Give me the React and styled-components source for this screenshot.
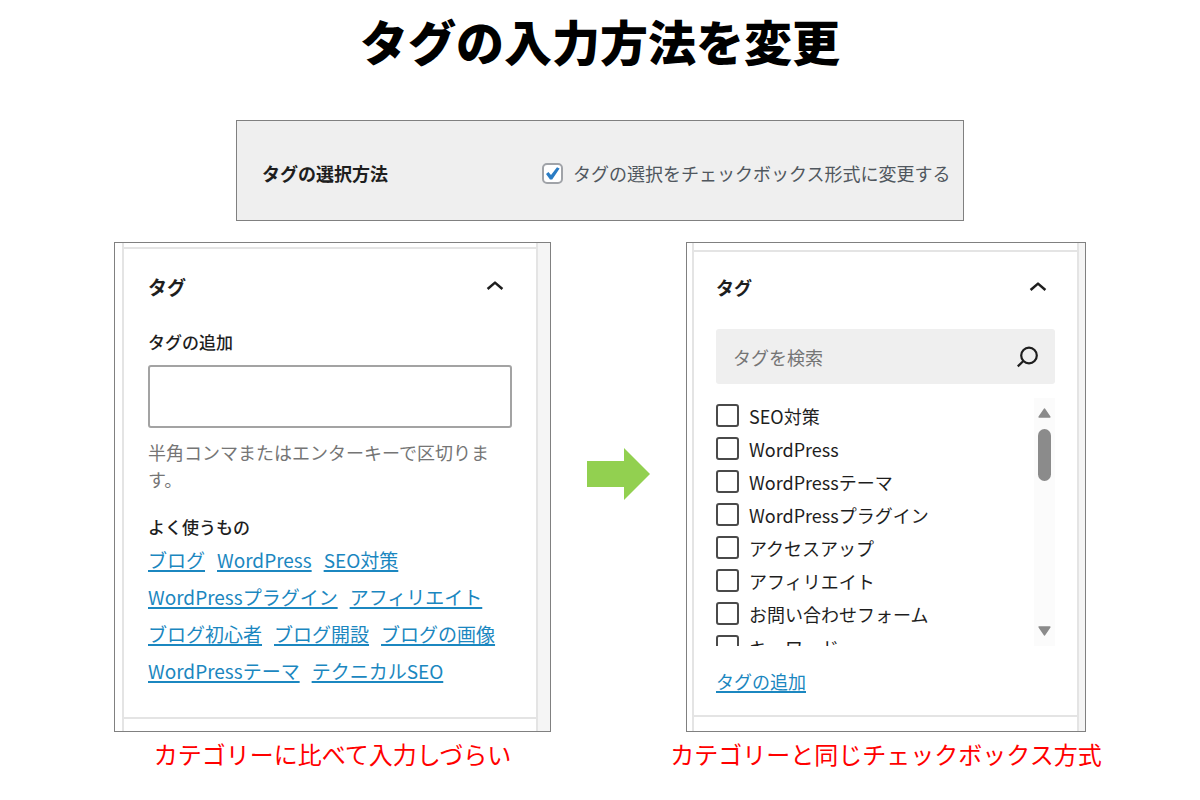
import React from 'react';
import styled, { createGlobalStyle } from 'styled-components';

const GlobalStyle = createGlobalStyle`
  *, *::before, *::after { box-sizing: border-box; }
  body {
    margin: 0;
    background: #fff;
    color: #1e1e1e;
    font-family: "Noto Sans CJK JP", "Noto Sans", sans-serif;
    font-size: 18px;
  }
  h1, h2, h3, p, ul, figure { margin: 0; padding: 0; }
  input, button { font: inherit; color: inherit; }
`;

const Page = styled.main`
  display: flex;
  flex-direction: column;
  align-items: center;
`;

const Title = styled.h1`
  font-size: 48px;
  line-height: 80px;
  font-weight: 900;
  color: #000;
`;

const Setting = styled.section`
  display: grid;
  grid-template-columns: 280px 1fr;
  align-items: center;
  width: 100%;
  max-width: 728px;
  margin: 40px 0 21px;
  padding: 39px 12px 33px 25px;
  border: 1px solid #808080;
  background: #efefef;
  line-height: 27px;
`;

const SettingName = styled.h2`
  font-size: 18px;
  font-weight: 700;
`;

const CheckLabel = styled.label`
  display: flex;
  align-items: center;
  gap: ${(p) => p.$gap}px;
  height: ${(p) => p.$height}px;
  color: ${(p) => p.$color};
  white-space: nowrap;
`;

const TickStack = styled.span`
  display: grid;
  place-items: center;
  > * { grid-area: 1 / 1; }
  svg { pointer-events: none; }
`;

const SettingCheckbox = styled.input`
  appearance: none;
  width: 21px;
  height: 21px;
  margin: 0;
  border: 2px solid #a0a3a8;
  border-radius: 5px;
  background: #fff;
`;

const TagCheckbox = styled.input`
  appearance: none;
  width: 23px;
  height: 23px;
  margin: 0;
  border: 2px solid #4a4a4a;
  border-radius: 3px;
  background: #fff;
`;

const Comparison = styled.div`
  display: grid;
  grid-template-columns: minmax(0, 437fr) 135px minmax(0, 400fr);
  width: 100%;
  max-width: 972px;
`;

const ArrowCell = styled.div`
  display: flex;
  justify-content: center;
  align-items: flex-start;
  padding-top: 206px;
`;

const Caption = styled.figcaption`
  display: flex;
  justify-content: center;
  margin-top: 4px;
  font-size: 24px;
  line-height: 36px;
  color: #f00;
  white-space: nowrap;
`;

const Frame = styled.div`
  padding: 0 ${(p) => p.$right}px 0 ${(p) => p.$left}px;
  border: 1px solid #808080;
  background: linear-gradient(to right, #fff 50%, #f5f5f5 50%);
`;

const Sidebar = styled.div`
  padding: ${(p) => p.$top}px 0 ${(p) => p.$bottom}px;
  border: solid #e4e4e4;
  border-width: 0 2px;
  background: #fff;
`;

const Section = styled.section`
  padding: ${(p) => p.$padding};
  border: solid #e4e4e4;
  border-width: 2px 0;
`;

const SectionHeader = styled.header`
  display: flex;
  align-items: center;
  justify-content: space-between;
  height: 28px;
`;

const SectionTitle = styled.h2`
  font-size: ${(p) => p.$size}px;
  font-weight: 700;
`;

const ToggleButton = styled.button`
  display: flex;
  align-items: center;
  justify-content: center;
  width: 34px;
  height: 28px;
  padding: 0;
  border: 0;
  background: none;
`;

const FieldLabel = styled.label`
  display: block;
  margin-top: 30px;
  font-size: 17px;
  line-height: 24px;
  font-weight: 500;
`;

const TagInput = styled.input`
  display: block;
  width: 100%;
  height: 63px;
  margin-top: 11px;
  padding: 0 16px;
  border: 2px solid #a3a3a3;
  border-radius: 3px;
  background: #fff;
`;

const Help = styled.p`
  margin-top: 11px;
  line-height: 27px;
  color: #757575;
`;

const SubHeading = styled.h3`
  margin-top: 22px;
  font-size: 17px;
  line-height: 24px;
  font-weight: 500;
`;

const TagCloud = styled.ul`
  display: flex;
  flex-wrap: wrap;
  column-gap: 12px;
  margin-top: 2px;
  list-style: none;
  font-size: 19px;
  line-height: 37px;
`;

const Link = styled.a`
  color: #1b87c0;
  text-decoration: underline;
  text-decoration-thickness: 2px;
  text-underline-offset: 2px;
  text-decoration-skip-ink: none;
`;

const SearchField = styled.div`
  display: flex;
  align-items: center;
  height: 55px;
  margin-top: 28px;
  padding: 0 16px 0 17px;
  border-radius: 3px;
  background: #efefef;
`;

const SearchInput = styled.input`
  flex: 1;
  min-width: 0;
  padding: 0;
  border: 0;
  outline: 0;
  background: none;
  &::placeholder { color: #757575; opacity: 1; }
`;

const ListArea = styled.div`
  display: flex;
  justify-content: space-between;
  height: 248px;
  margin-top: 14px;
  overflow: hidden;
`;

const TagList = styled.ul`
  padding-top: 1px;
  list-style: none;
`;

const ScrollBar = styled.div`
  display: flex;
  flex-direction: column;
  align-items: center;
  width: 21px;
  padding: 10px 0;
  background: #fbfbfb;
`;

const Thumb = styled.div`
  width: 13px;
  height: 52px;
  margin: 11px 0 auto;
  border-radius: 7px;
  background: #8b8b8b;
`;

const AddLine = styled.p`
  margin-top: 21px;
  line-height: 28px;
`;

const Chevron = () => (
  <svg width="18" height="12" viewBox="0 0 18 12" fill="none" stroke="#1e1e1e" strokeWidth="2.5" aria-hidden="true">
    <path d="M1.6 9 9 2.6 16.4 9" strokeLinejoin="round" />
  </svg>
);

const Tick = () => (
  <svg width="15" height="15" viewBox="0 0 15 15" aria-hidden="true">
    <path d="M1 8 3.4 6 6 8.9 12 1.2 14.6 2.4 7.2 13.4 5 13.6Z" fill="#2a7cc4" />
  </svg>
);

const SearchIcon = () => (
  <svg width="24" height="24" viewBox="0 0 24 24" fill="none" stroke="#1e1e1e" strokeWidth="2.2" aria-hidden="true">
    <circle cx="14" cy="10.5" r="7.8" />
    <path d="M8.4 16 2.8 21.4" />
  </svg>
);

const ScrollArrow = ({ down }) => (
  <svg width="13" height="10" viewBox="0 0 13 10" aria-hidden="true">
    <path
      d={down ? 'M1.2 1H11.8L6.5 8.8Z' : 'M1.2 9H11.8L6.5 1.2Z'}
      fill="#8b8b8b"
      stroke="#8b8b8b"
      strokeWidth="1.6"
      strokeLinejoin="round"
    />
  </svg>
);

const BlockArrow = () => (
  <svg width="63" height="52" viewBox="0 0 63 52" aria-hidden="true">
    <path d="M0 13H37V0L63 26 37 52V39H0Z" fill="#92d050" />
  </svg>
);

const popularTags = [
  'ブログ',
  'WordPress',
  'SEO対策',
  'WordPressプラグイン',
  'アフィリエイト',
  'ブログ初心者',
  'ブログ開設',
  'ブログの画像',
  'WordPressテーマ',
  'テクニカルSEO',
];

const tags = [
  'SEO対策',
  'WordPress',
  'WordPressテーマ',
  'WordPressプラグイン',
  'アクセスアップ',
  'アフィリエイト',
  'お問い合わせフォーム',
  'キーワード',
];

export default function App() {
  return (
    <Page lang="ja">
      <GlobalStyle />
      <Title>タグの入力方法を変更</Title>

      <Setting>
        <SettingName>タグの選択方法</SettingName>
        <CheckLabel $gap={10} $height={27} $color="#50575e">
          <TickStack>
            <SettingCheckbox type="checkbox" defaultChecked />
            <Tick />
          </TickStack>
          タグの選択をチェックボックス形式に変更する
        </CheckLabel>
      </Setting>

      <Comparison>
        <figure>
          <Frame $left={7} $right={12}>
            <Sidebar $top={4} $bottom={12}>
              <Section $padding="23px 24px 28px">
                <SectionHeader>
                  <SectionTitle $size={19}>タグ</SectionTitle>
                  <ToggleButton type="button" aria-label="タグ">
                    <Chevron />
                  </ToggleButton>
                </SectionHeader>
                <FieldLabel htmlFor="new-tag">タグの追加</FieldLabel>
                <TagInput id="new-tag" type="text" />
                <Help>半角コンマまたはエンターキーで区切ります。</Help>
                <SubHeading>よく使うもの</SubHeading>
                <TagCloud>
                  {popularTags.map((tag) => (
                    <li key={tag}>
                      <Link href="#">{tag}</Link>
                    </li>
                  ))}
                </TagCloud>
              </Section>
            </Sidebar>
          </Frame>
          <Caption>カテゴリーに比べて入力しづらい</Caption>
        </figure>

        <ArrowCell>
          <BlockArrow />
        </ArrowCell>

        <figure>
          <Frame $left={5} $right={6}>
            <Sidebar $top={7} $bottom={14}>
              <Section $padding="21px 22px 20px">
                <SectionHeader>
                  <SectionTitle $size={18}>タグ</SectionTitle>
                  <ToggleButton type="button" aria-label="タグ">
                    <Chevron />
                  </ToggleButton>
                </SectionHeader>
                <SearchField>
                  <SearchInput type="text" placeholder="タグを検索" aria-label="タグを検索" />
                  <SearchIcon />
                </SearchField>
                <ListArea>
                  <TagList>
                    {tags.map((tag) => (
                      <li key={tag}>
                        <CheckLabel $gap={10} $height={33} $color="#1e1e1e">
                          <TagCheckbox type="checkbox" />
                          {tag}
                        </CheckLabel>
                      </li>
                    ))}
                  </TagList>
                  <ScrollBar aria-hidden="true">
                    <ScrollArrow />
                    <Thumb />
                    <ScrollArrow down />
                  </ScrollBar>
                </ListArea>
                <AddLine>
                  <Link href="#">タグの追加</Link>
                </AddLine>
              </Section>
            </Sidebar>
          </Frame>
          <Caption>カテゴリーと同じチェックボックス方式</Caption>
        </figure>
      </Comparison>
    </Page>
  );
}
